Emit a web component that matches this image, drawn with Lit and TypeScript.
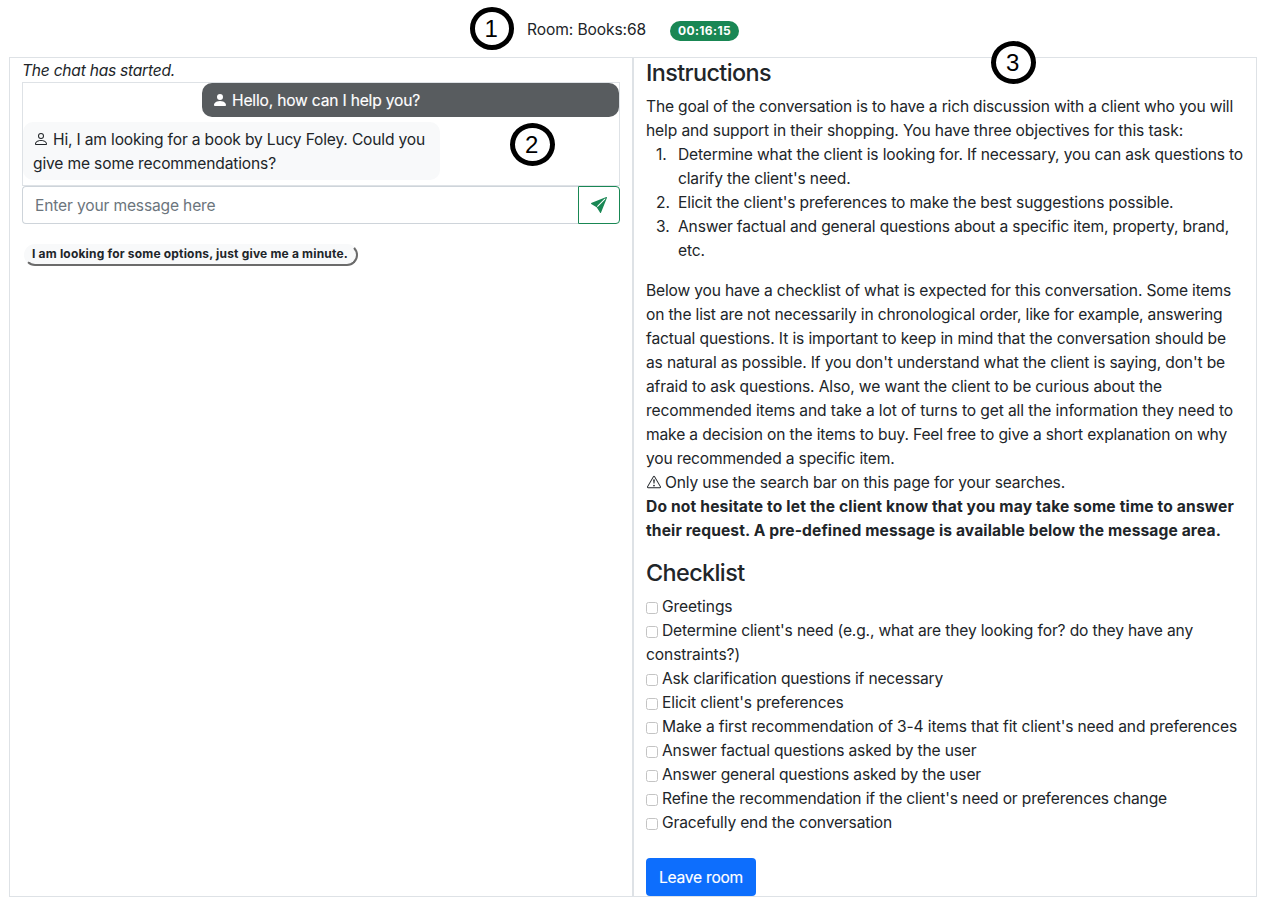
import { LitElement, html, css } from "lit";
import { customElement, property } from "lit/decorators.js";

/** One line of text whose tracking is tuned so that it spans a set width. */
@customElement("fit-text")
class FitText extends LitElement {
  @property({ type: Number }) w = 0;
  @property() text = "";
  static styles = css`
    :host { display: inline-block; white-space: nowrap; }
  `;
  updated() {
    this.style.letterSpacing = "0";
    const natural = this.getBoundingClientRect().width;
    this.style.letterSpacing = (this.w - natural) / this.text.length + "px";
  }
  render() {
    return html`<span>${this.text}</span>`;
  }
}

type Line = [string, number];
const fit = ([t, w]: Line) => html`<fit-text .text=${t} .w=${w}></fit-text>`;

const GOAL: Line[] = [
  ["The goal of the conversation is to have a rich discussion with a client who you will", 587],
  ["help and support in their shopping. You have three objectives for this task:", 537],
];
const OBJECTIVES: Line[][] = [
  [["Determine what the client is looking for. If necessary, you can ask questions to", 565], ["clarify the client's need.", 172.5]],
  [["Elicit the client's preferences to make the best suggestions possible.", 495.5]],
  [["Answer factual and general questions about a specific item, property, brand,", 551], ["etc.", 27]],
];
const BELOW: Line[] = [
  ["Below you have a checklist of what is expected for this conversation. Some items", 585],
  ["on the list are not necessarily in chronological order, like for example, answering", 576.5],
  ["factual questions. It is important to keep in mind that the conversation should be", 580],
  ["as natural as possible. If you don't understand what the client is saying, don't be", 579],
  ["afraid to ask questions. Also, we want the client to be curious about the", 516],
  ["recommended items and take a lot of turns to get all the information they need to", 587],
  ["make a decision on the items to buy. Feel free to give a short explanation on why", 581],
  ["you recommended a specific item.", 248.5],
];
const NOTICE: Line[] = [
  ["Do not hesitate to let the client know that you may take some time to answer", 588],
  ["their request. A pre-defined message is available below the message area.", 575],
];
const CHECKS: Line[][] = [
  [["Greetings", 70.5]],
  [["Determine client's need (e.g., what are they looking for? do they have any", 531], ["constraints?)", 94]],
  [["Ask clarification questions if necessary", 281]],
  [["Elicit client's preferences", 181.5]],
  [["Make a first recommendation of 3-4 items that fit client's need and preferences", 575]],
  [["Answer factual questions asked by the user", 314.5]],
  [["Answer general questions asked by the user", 319]],
  [["Refine the recommendation if the client's need or preferences change", 505]],
  [["Gracefully end the conversation", 230]],
];

@customElement("app-root")
class AppRoot extends LitElement {
  static styles = css`
    :host {
      display: block; position: relative; height: 909px; overflow: hidden; background: #fff;
      color: #212529; font: 15.6px/24px Inter, "Liberation Sans", sans-serif;
    }
    * { box-sizing: border-box; }
    .top { height: 57px; padding: 18px 0 0 527px; display: flex; align-items: flex-start; }
    .timer {
      margin: 3px 0 0 24px; width: 69px; height: 20px; border-radius: 10px; background: #198754;
      color: #fff; font-size: 12px; font-weight: 700; line-height: 20px; text-align: center;
    }
    .frame { margin-left: 9px; width: 1248px; height: 840px; border: 1px solid #dee2e6; display: flex; }
    .chat { width: 624px; padding: 0 13px 0 12px; border-right: 2px solid #dee2e6; }
    .status { font-style: italic; height: 24px; padding-top: 1px; }
    .log { border: 1px solid #dee2e6; height: 104px; width: 598px; display: flex; flex-direction: column; gap: 5px; }
    .msg { width: 417px; border-radius: 10px; padding: 6px 10px 4px; }
    .mine { align-self: flex-end; background: #585c5f; color: #fff; height: 34px; -webkit-text-stroke: .15px #fff; }
    .theirs { background: #f8f9fa; height: 58px; }
    .line { display: block; height: 24px; white-space: nowrap; }
    .ico { display: inline-block; width: 16px; height: 16px; vertical-align: -2px; fill: currentColor; }
    .gap { margin-right: 4px; }
    .warn { width: 14px; height: 14px; margin: 0 4px 0 1px; vertical-align: -1px; }
    .entry { display: flex; width: 598px; height: 38px; }
    .field { flex: 1; border: 1px solid #ced4da; border-right: 0; border-radius: 4px 0 0 4px; padding: 7px 12px 5px; color: #6c757d; }
    .send { width: 42px; border: 1px solid #198754; border-radius: 0 4px 4px 0; color: #198754; display: flex; align-items: center; justify-content: center; }
    .preset {
      margin: 20px 0 0 2px; width: 334px; height: 22px; border-radius: 11px; background: #f8f9fa;
      border: 2px solid; border-color: #f8f9fa #6b6b6b #6b6b6b #f8f9fa;
      padding-left: 6px; font-size: 12px; font-weight: 700; line-height: 15px;
    }
    .guide { padding: 1px 0 0 12px; flex: 1; }
    h4 { margin: 0 0 7px; font-size: 23.4px; font-weight: 500; line-height: 28.8px; }
    ol { margin: 0 0 16px; padding: 0; list-style: none; }
    li { display: flex; }
    .num { width: 32px; padding-left: 10px; }
    .bold { font-weight: 700; margin-bottom: 16px; }
    .box { display: inline-block; width: 12px; height: 12px; border: 1px solid #c4c4c4; border-radius: 2.5px; margin-right: 4px; vertical-align: -2px; background: #fff; }
    .leave { margin-top: 23px; width: 110px; height: 38px; border-radius: 4px; background: #0d6efd; color: #fff; padding: 8px 13px 6px; -webkit-text-stroke: .15px #fff; }
    .mark {
      position: absolute; width: 44.5px; height: 43px; border: 5px solid #000; border-radius: 50%;
      display: flex; align-items: center; justify-content: center; color: #000; background: #fff;
      font-family: "Liberation Sans", Arial, sans-serif; font-size: 24px; line-height: 32px; padding-right: 1px;
    }
    .m1 { left: 469.5px; top: 7px; }
    .m2 { left: 510px; top: 123px; }
    .m3 { left: 991px; top: 41px; }
  `;

  lines(ls: Line[]) {
    return ls.map((l) => html`<span class="line">${fit(l)}</span>`);
  }

  render() {
    return html`
      <div class="top">
        ${fit(["Room: Books:68", 119])}
        <div class="timer">${fit(["00:16:15", 53])}</div>
      </div>
      <div class="frame">
        <section class="chat">
          <div class="status">${fit(["The chat has started.", 153])}</div>
          <div class="log">
            <div class="msg mine"><span class="line"><svg class="ico gap" viewBox="0 0 16 16"><path d="M3 14s-1 0-1-1 1-4 6-4 6 3 6 4-1 1-1 1H3zm5-6a3 3 0 1 0 0-6 3 3 0 0 0 0 6z"/></svg>${fit(["Hello, how can I help you?", 188])}</span></div>
            <div class="msg theirs">
              <span class="line"><svg class="ico gap" viewBox="0 0 16 16"><path d="M8 8a3 3 0 1 0 0-6 3 3 0 0 0 0 6zm2-3a2 2 0 1 1-4 0 2 2 0 0 1 4 0zm4 8c0 1-1 1-1 1H3s-1 0-1-1 1-4 6-4 6 3 6 4zm-1-.004c-.001-.246-.154-.986-.832-1.664C11.516 10.68 10.289 10 8 10c-2.29 0-3.516.68-4.168 1.332-.678.678-.83 1.418-.832 1.664h10z"/></svg>${fit(["Hi, I am looking for a book by Lucy Foley. Could you", 372])}</span>
              ${this.lines([["give me some recommendations?", 243]])}
            </div>
          </div>
          <div class="entry">
            <div class="field">${fit(["Enter your message here", 180.5])}</div>
            <div class="send"><svg class="ico" viewBox="0 0 16 16"><path d="M15.964.686a.5.5 0 0 0-.65-.65L.767 5.855H.766l-.452.18a.5.5 0 0 0-.082.887l.41.26.001.002 4.995 3.178 3.178 4.995.002.002.26.41a.5.5 0 0 0 .886-.083l6-15zm-1.833 1.89L6.637 10.07l-.215-.338a.5.5 0 0 0-.154-.154l-.338-.215 7.494-7.494 1.178-.471-.47 1.178z"/></svg></div>
          </div>
          <div class="preset">${fit(["I am looking for some options, just give me a minute.", 316])}</div>
        </section>
        <section class="guide">
          <h4>${fit(["Instructions", 125])}</h4>
          ${this.lines(GOAL)}
          <ol>${OBJECTIVES.map((o, i) => html`<li><span class="num">${i + 1}.</span><div>${this.lines(o)}</div></li>`)}</ol>
          ${this.lines(BELOW)}
          <span class="line"><svg class="ico warn" viewBox="0 0 16 16"><path d="M7.938 2.016A.13.13 0 0 1 8.002 2a.13.13 0 0 1 .063.016.146.146 0 0 1 .054.057l6.857 11.667c.036.06.035.124.002.183a.163.163 0 0 1-.054.06.116.116 0 0 1-.066.017H1.146a.115.115 0 0 1-.066-.017.163.163 0 0 1-.054-.06.176.176 0 0 1 .002-.183L7.884 2.073a.147.147 0 0 1 .054-.057zm1.044-.45a1.13 1.13 0 0 0-1.96 0L.165 13.233c-.457.778.091 1.767.98 1.767h13.713c.889 0 1.438-.99.98-1.767L8.982 1.566zM7.002 12a1 1 0 1 1 2 0 1 1 0 0 1-2 0zM7.1 5.995a.905.905 0 1 1 1.8 0l-.35 3.507a.552.552 0 0 1-1.1 0L7.1 5.995z"/></svg>${fit(["Only use the search bar on this page for your searches.", 400])}</span>
          <div class="bold">${this.lines(NOTICE)}</div>
          <h4>${fit(["Checklist", 98.5])}</h4>
          ${CHECKS.map(([first, ...rest]) => html`<span class="line"><i class="box"></i>${fit(first)}</span>${this.lines(rest)}`)}
          <div class="leave">${fit(["Leave room", 84])}</div>
        </section>
      </div>
      <div class="mark m1">1</div>
      <div class="mark m2">2</div>
      <div class="mark m3">3</div>
    `;
  }
}
